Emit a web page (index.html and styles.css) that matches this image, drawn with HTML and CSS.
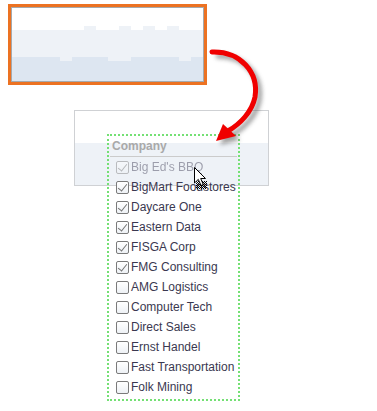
FILE: index.html
```html
<!DOCTYPE html>
<html lang="en">
  <head>
    <meta charset="UTF-8" />
    <meta name="viewport" content="width=device-width, initial-scale=1.0" />
    <title>Drag a field to the filter</title>
    <link rel="stylesheet" href="styles.css">
  </head>
  <body>
    <div class="stage">
      <!-- Source grid (zoomed, blurred) -->
      <div class="source">
        <div class="source-inner"></div>
      </div>

      <!-- Drop target -->
      <div class="target">
        <div class="target-band"></div>
      </div>

      <!-- Dragged filter list -->
      <div class="filter">
        <div class="filter-header">Company</div>
        <ul class="filter-list">
          <li class="item dragging"><span class="check on"></span>Big Ed's BBQ</li>
          <li class="item"><span class="check on"></span>BigMart Foodstores</li>
          <li class="item"><span class="check on"></span>Daycare One</li>
          <li class="item"><span class="check on"></span>Eastern Data</li>
          <li class="item"><span class="check on"></span>FISGA Corp</li>
          <li class="item"><span class="check on"></span>FMG Consulting</li>
          <li class="item"><span class="check"></span>AMG Logistics</li>
          <li class="item"><span class="check"></span>Computer Tech</li>
          <li class="item"><span class="check"></span>Direct Sales</li>
          <li class="item"><span class="check"></span>Ernst Handel</li>
          <li class="item"><span class="check"></span>Fast Transportation</li>
          <li class="item"><span class="check"></span>Folk Mining</li>
        </ul>
      </div>

      <!-- Arrow -->
      <svg class="arrow" width="377" height="411" viewBox="0 0 377 411">
        <defs>
          <filter id="blur" x="-20%" y="-20%" width="140%" height="140%">
            <feGaussianBlur stdDeviation="2" />
          </filter>
        </defs>
        <g transform="translate(4 4)" filter="url(#blur)" opacity="0.55">
          <path d="M212 52 C240 51 259 72 255 97 C252 112 240 124 228 131" fill="none" stroke="#555" stroke-width="5" />
          <path d="M216 141 L223 124 L236 136 Z" fill="#555" />
        </g>
        <path d="M212 52 C240 51 259 72 255 97 C252 112 240 124 228 131" fill="none" stroke="#f00000" stroke-width="5" stroke-linecap="round" />
        <path d="M216 141 L223 124 L236 136 Z" fill="#f00000" />
      </svg>

      <!-- Mouse cursor with drag rectangle -->
      <svg class="cursor" width="16" height="24" viewBox="0 0 16 24">
        <defs>
          <pattern id="checker" width="2" height="2" patternUnits="userSpaceOnUse">
            <rect width="1" height="1" fill="#000" />
            <rect x="1" y="1" width="1" height="1" fill="#000" />
          </pattern>
        </defs>
        <rect x="2" y="14" width="11" height="8" fill="url(#checker)" />
        <path d="M0.5 0.5 L0.5 16 L4.3 12.4 L7 18.5 L9.3 17.5 L6.7 11.5 L11.5 11.5 Z" fill="#fff" stroke="#000" stroke-width="1" stroke-linejoin="round" />
      </svg>
    </div>
  </body>
</html>
```

FILE: styles.css
```css
* {
  margin: 0;
  padding: 0;
  box-sizing: border-box;
}

body {
  background: white;
  font-family: "Liberation Sans", Arial, sans-serif;
}

.stage {
  position: relative;
  width: 377px;
  height: 411px;
  overflow: hidden;
}

/* Source grid */
.source {
  position: absolute;
  left: 8px;
  top: 4px;
  width: 199px;
  height: 81px;
  border: 3px solid #ec7222;
}

.source-inner {
  height: 100%;
  border: 1px solid #a5a9ad;
  background:
    linear-gradient(#eef2f7, #eef2f7) 72px 18px / 12px 5px no-repeat,
    linear-gradient(#eef2f7, #eef2f7) 107px 18px / 12px 5px no-repeat,
    linear-gradient(#eef2f7, #eef2f7) 131px 18px / 12px 5px no-repeat,
    linear-gradient(#eef2f7, #eef2f7) 155px 18px / 12px 5px no-repeat,
    linear-gradient(#eef2f7, #eef2f7) 48px 49px / 12px 4px no-repeat,
    linear-gradient(#eef2f7, #eef2f7) 96px 49px / 23px 4px no-repeat,
    linear-gradient(#eef2f7, #eef2f7) 167px 49px / 12px 4px no-repeat,
    linear-gradient(#dde6f1, #dde6f1) 0 49px / 100% 100% no-repeat,
    linear-gradient(#eef2f7, #eef2f7) 0 22px / 100% 100% no-repeat,
    white;
}

/* Drop target */
.target {
  position: absolute;
  left: 74px;
  top: 110px;
  width: 195px;
  height: 76px;
  border: 1px solid #cfd1d4;
  background: white;
  padding-top: 32px;
}

.target-band {
  height: 100%;
  background: #eef2f7;
}

/* Filter list */
.filter {
  position: absolute;
  left: 107px;
  top: 134px;
  width: 133px;
  height: 267px;
  border: 2px dotted #74e074;
}

.filter-header {
  margin: 0 1px;
  height: 21px;
  padding: 2px 2px 0;
  border-bottom: 1px solid #cbcbcb;
  color: #a9a9a9;
  font-size: 12px;
  font-weight: bold;
  line-height: 17px;
}

.filter-list {
  list-style: none;
}

.item {
  display: flex;
  align-items: center;
  gap: 3px;
  height: 20px;
  padding-left: 7px;
  color: #3a3850;
  font-size: 12px;
  white-space: nowrap;
}

.item.dragging {
  opacity: 0.45;
}

.check {
  position: relative;
  flex: none;
  width: 13px;
  height: 13px;
  margin-right: -1px;
  border: 1px solid #7a7a7a;
  border-radius: 2px;
  background: linear-gradient(#ffffff, #eef1f5);
}

.check.on::after {
  content: "";
  position: absolute;
  left: 3px;
  top: 0;
  width: 4px;
  height: 8px;
  border: solid #707070;
  border-width: 0 1.5px 1.5px 0;
  transform: rotate(38deg);
}

/* Overlays */
.arrow {
  position: absolute;
  left: 0;
  top: 0;
  pointer-events: none;
}

.cursor {
  position: absolute;
  left: 194px;
  top: 167px;
  pointer-events: none;
}
```
